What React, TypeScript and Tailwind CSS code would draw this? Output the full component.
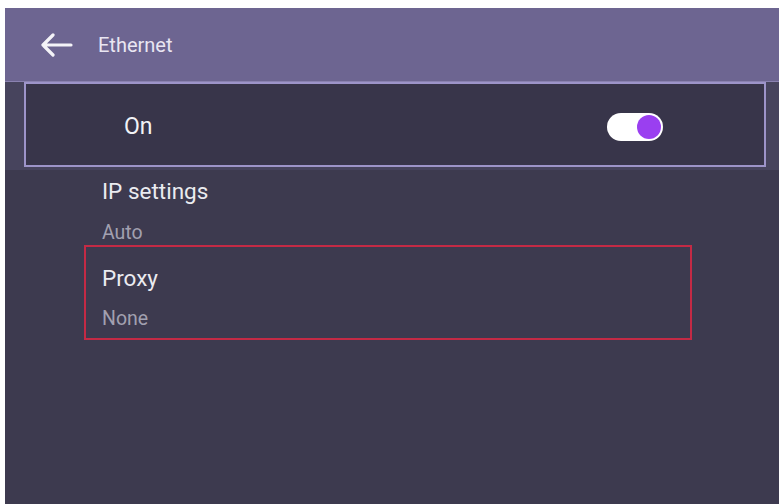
export default function App() {
  return (
    <div className="w-[779px] h-[504px] bg-white pt-[8px] pl-[5px] overflow-hidden" style={{ fontFamily: 'Roboto, "Noto Sans", sans-serif' }}>
      <div className="w-[774px] h-[496px] bg-[#3d3a4f] flex flex-col">
        <div className="h-[74px] bg-[#6d6591] flex items-center border-b border-[#8a82b0]">
          <svg className="ml-[33px]" width="36" height="24" viewBox="0 0 36 24" fill="none">
            <path d="M33 12H5M15 2L5 12l10 10" stroke="#f4f3f8" strokeWidth="3.2" strokeLinecap="round" strokeLinejoin="round" />
          </svg>
          <span className="ml-[24px] text-[20px] text-[#e9e6f2]">Ethernet</span>
        </div>
        <div className="h-[88px] bg-[#47445d] pr-[13px] pl-[19px] pb-[3px]">
          <div className="h-full bg-[#38354a] border-2 border-[#9d94c9] flex items-center pt-[4px]">
            <span className="ml-[98px] text-[23px] leading-[30px] text-[#f2f2f6]">On</span>
            <div className="ml-auto mr-[101px] w-[56px] h-[28px] rounded-full bg-white flex items-center justify-end pr-[2px]">
              <div className="w-[24px] h-[24px] rounded-full bg-[#9a3ff0]" />
            </div>
          </div>
        </div>
        <div className="pl-[79px] pt-[7px]">
          <div className="pl-[18px]">
            <div className="text-[22.5px] leading-[28px] text-[#ebebf0]">IP settings</div>
            <div className="text-[19.5px] leading-[24px] mt-[16px] text-[#a2a0b0]">Auto</div>
          </div>
          <div className="w-[608px] h-[95px] border-2 border-[#c42a45] pl-[16px] pt-[16px]">
            <div className="text-[22.5px] leading-[30px] text-[#ebebf0]">Proxy</div>
            <div className="text-[19.5px] leading-[24px] mt-[14px] text-[#a2a0b0]">None</div>
          </div>
        </div>
      </div>
    </div>
  );
}
